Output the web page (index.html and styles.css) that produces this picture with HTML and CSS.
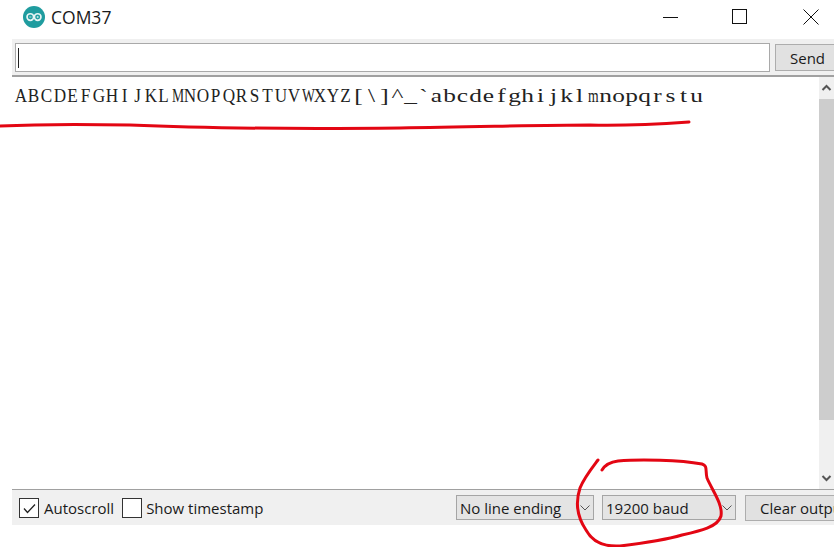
FILE: index.html
```html
<!DOCTYPE html>
<html lang="en">
<head>
<meta charset="utf-8">
<title>COM37</title>
<link rel="stylesheet" href="styles.css">
</head>
<body>
<div class="window">
  <header class="titlebar">
    <svg class="logo" viewBox="0 0 24 24" width="24" height="24" aria-hidden="true">
      <circle cx="12" cy="12" r="12" fill="#1f9c9f"/>
      <circle cx="8" cy="12" r="3.600" fill="none" stroke="#e8f5f5" stroke-width="1.800"/>
      <circle cx="16" cy="12" r="3.600" fill="none" stroke="#e8f5f5" stroke-width="1.800"/>
      <path d="M6.800 12h2.400M14.800 12h2.400M16 10.800v2.400" stroke="#e8f5f5" stroke-width="0.800" fill="none"/>
    </svg>
    <span class="title">COM37</span>
    <div class="winctrls">
      <svg width="16" height="16" viewBox="0 0 16 16" class="wc-min" aria-hidden="true"><path d="M0 8.500h15" stroke="#111" fill="none"/></svg>
      <svg width="16" height="16" viewBox="0 0 16 16" class="wc-max" aria-hidden="true"><rect x="0.500" y="0.500" width="14" height="14" stroke="#111" fill="none"/></svg>
      <svg width="16" height="16" viewBox="0 0 16 16" class="wc-close" aria-hidden="true"><path d="M0.500 0.500l15 15M15.500 0.500l-15 15" stroke="#111" fill="none"/></svg>
    </div>
  </header>
  <main class="panel">
    <div class="sendbar">
      <div class="input"><span class="caret"></span></div>
      <button class="btn send">Send</button>
    </div>
    <div class="output">
      <pre class="serial"><b class="c">A</b><b class="c">B</b><b class="c">C</b><b class="c">D</b><b class="c">E</b><b class="c">F</b><b class="c">G</b><b class="c">H</b><b class="c">I</b><b class="c">J</b><b class="c">K</b><b class="c">L</b><b class="w">M</b><b class="c">N</b><b class="c">O</b><b class="c">P</b><b class="c">Q</b><b class="c">R</b><b class="c">S</b><b class="c">T</b><b class="c">U</b><b class="c">V</b><b class="w">W</b><b class="c">X</b><b class="c">Y</b><b class="c">Z</b><b>[</b><b>\</b><b>]</b><b>^</b><b>_</b><b>`</b><b>a</b><b>b</b><b>c</b><b>d</b><b>e</b><b>f</b><b>g</b><b>h</b><b>i</b><b>j</b><b>k</b><b>l</b><b class="w">m</b><b>n</b><b>o</b><b>p</b><b>q</b><b>r</b><b>s</b><b>t</b><b>u</b></pre>
      <div class="scrollbar">
        <svg class="arrow" width="15" height="22" viewBox="0 0 15 22" aria-hidden="true"><path d="M3.500 13l4-4 4 4" fill="none" stroke="#555" stroke-width="2"/></svg>
        <div class="thumb"></div>
        <svg class="arrow" width="15" height="22" viewBox="0 0 15 22" aria-hidden="true"><path d="M3.500 9l4 4 4-4" fill="none" stroke="#555" stroke-width="2"/></svg>
      </div>
    </div>
    <div class="statusbar">
      <label class="check"><span class="box"><svg width="19" height="19" viewBox="0 0 19 19" aria-hidden="true"><path d="M4 9.500l3.500 4 7.500-8" fill="none" stroke="#222" stroke-width="1.300"/></svg></span>Autoscroll</label>
      <label class="check"><span class="box"></span>Show timestamp</label>
      <div class="spacer"></div>
      <div class="select ending"><span>No line ending</span><svg width="10" height="6" viewBox="0 0 10 6" aria-hidden="true"><path d="M0.500 0.500l4.500 4.500 4.500-4.500" fill="none" stroke="#555"/></svg></div>
      <div class="select baud"><span>19200 baud</span><svg width="10" height="6" viewBox="0 0 10 6" aria-hidden="true"><path d="M0.500 0.500l4.500 4.500 4.500-4.500" fill="none" stroke="#555"/></svg></div>
      <button class="btn clear">Clear output</button>
    </div>
  </main>
</div>
<svg class="ink" width="834" height="547" viewBox="0 0 834 547" aria-hidden="true">
  <path d="M0 126C40 124 80 124 130 125C220 129 300 129 400 128C480 127 540 125 590 125C630 126 660 124 689 122" />
  <path d="M598 460C592 468 584 478 580 488C575 503 578 518 586 530C592 541 604 547 620 546C645 543 665 540 682 535C700 531 718 527 721 516C723 504 712 490 707 478C705 470 708 466 702 464C680 460 640 459 618 461C610 462 605 465 602 470" />
</svg>
</body>
</html>
```
FILE: styles.css
```css
html, body { margin: 0; padding: 0; background: #fff; }
body { width: 834px; height: 547px; overflow: hidden; position: relative; font-family: "Open Sans", "Noto Sans", sans-serif; color: #1a1a1a; }
.window { display: flex; flex-direction: column; height: 100%; }
.titlebar { height: 39px; display: flex; align-items: center; padding: 0 0 6px 23px; box-sizing: border-box; }
.logo { width: 22px; height: 22px; }
.title { font-size: 17.500px; margin-left: 6px; }
.winctrls { margin-left: auto; display: flex; align-items: center; }
.wc-min { margin-right: 53px; }
.wc-max { margin-right: 55px; }
.wc-close { margin-right: 15px; }
.panel { margin-left: 12px; display: flex; flex-direction: column; height: 486px; }
.sendbar { height: 38px; box-sizing: border-box; background: #f0f0f0; border-bottom: 2px solid #a0a0a0; display: flex; align-items: flex-start; padding: 4px 0 0 3px; gap: 5px; }
.input { width: 751px; height: 27px; border: 1px solid #a9a9a9; background: #fff; display: flex; align-items: center; padding-left: 2px; }
.caret { width: 1px; height: 20px; background: #222; }
.btn { font: inherit; font-size: 15px; color: #1a1a1a; background: #e1e1e1; border: 1px solid #adadad; padding: 0; white-space: nowrap; overflow: hidden; box-sizing: border-box; }
.send { flex: 1; height: 27px; margin-top: 1px; border-right: 0; text-align: left; padding-left: 14px; }
.output { flex: 1; background: #fff; display: flex; min-height: 0; }
.serial { flex: 1; margin: 6px 0 0 2px; font-family: "Liberation Serif", serif; font-size: 19.500px; line-height: 26px; color: #222; }
.serial b { display: inline-block; width: 13px; text-align: center; font-weight: 400; transform: scaleX(1.3); }
.serial .c { transform: scaleX(0.88); }
.serial .w { transform: scaleX(0.7); }
.scrollbar { width: 15px; background: #f0f0f0; display: flex; flex-direction: column; }
.thumb { flex: 1; background: #cdcdcd; margin-bottom: 47px; }
.arrow { display: block; flex: none; }
.statusbar { height: 36px; box-sizing: border-box; background: #f0f0f0; border-top: 1px solid #a0a0a0; display: flex; align-items: center; padding-left: 7px; font-size: 15px; }
.check { display: flex; align-items: center; gap: 4px; margin-right: 8px; white-space: nowrap; }
.check:first-child { gap: 5px; }
.box { width: 18px; height: 18px; border: 1px solid #333; background: #fff; display: block; flex: none; }
.box svg { display: block; }
.spacer { flex: 1; }
.select { height: 25px; box-sizing: border-box; background: #e4e4e4; border: 1px solid #a5a5a5; display: flex; align-items: center; justify-content: space-between; padding: 0 3px; white-space: nowrap; }
.ending { width: 138px; margin-right: 8px; }
.baud { width: 134px; margin-right: 9px; }
.clear { width: 89px; height: 26px; border-right: 0; text-align: left; padding-left: 14px; }
.ink { position: absolute; left: 0; top: 0; pointer-events: none; }
.ink path { fill: none; stroke: #e30613; stroke-width: 3px; stroke-linecap: round; stroke-linejoin: round; }
```
